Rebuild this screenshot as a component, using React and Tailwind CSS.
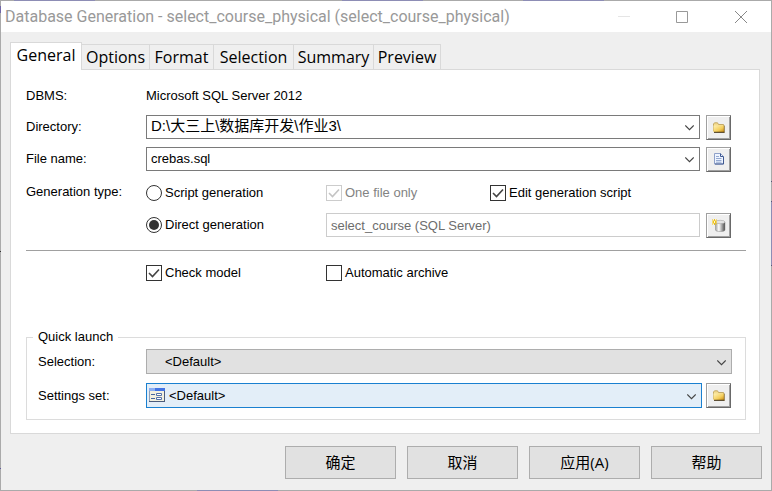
import React from "react";

const tabs = [
  { name: "Options", width: "w-[68px]" },
  { name: "Format", width: "w-16" },
  { name: "Selection", width: "w-20" },
  { name: "Summary", width: "w-20" },
  { name: "Preview", width: "w-[67px]" },
];

function Chevron() {
  return (
    <svg viewBox="0 0 9 6" className="pointer-events-none absolute right-[6px] top-1/2 -mt-[2px] h-[6px] w-[9px]" fill="none" stroke="#444" strokeWidth="1.1">
      <path d="M0.3 0.5 4.5 4.7 8.7 0.5" />
    </svg>
  );
}

function FolderIcon() {
  return (
    <svg viewBox="0 0 12 11" className="h-[11px] w-3">
      <defs>
        <linearGradient id="folder" x1="0" y1="0" x2="1" y2="1">
          <stop offset="0" stopColor="#fff3b8" />
          <stop offset="0.6" stopColor="#f4ce5c" />
          <stop offset="1" stopColor="#c88a14" />
        </linearGradient>
      </defs>
      <path d="M.5 9V2L1.500.8h3L5.500 2.500h5V9z" fill="#f4dc90" stroke="#b89a50" strokeWidth="0.8" />
      <path d="M.5 3.500h10.500v6.500H.5z" fill="url(#folder)" />
      <path d="M1 10.300h10.500" fill="none" stroke="#3a2808" />
      <path d="M11.300 3.500v7" fill="none" stroke="#7a5a18" strokeWidth=".8" />
    </svg>
  );
}

function PageIcon() {
  return (
    <svg viewBox="0 0 10 12" className="h-3 w-[10px]">
      <path d="M.5.5h6l3 3v7.500h-9z" fill="#eef4ff" stroke="#8ea0c8" />
      <path d="M6.500.5v3h3M9.500 4v7H1" fill="none" stroke="#3f5890" />
      <path d="M2 3.500h3M2 5.500h5.500M2 7.500h5.500M2 9.200h5.500" stroke="#93a8d0" />
    </svg>
  );
}

function DatabaseIcon() {
  return (
    <svg viewBox="0 0 14 13" className="h-[13px] w-[14px]">
      <defs>
        <linearGradient id="drum">
          <stop offset="0" stopColor="#a0a0a0" />
          <stop offset="0.35" stopColor="#fff" />
          <stop offset="1" stopColor="#4a4a4a" />
        </linearGradient>
      </defs>
      <path d="M3.500 3v8c0 2 9.500 2 9.500 0V3z" fill="url(#drum)" stroke="#888" strokeWidth=".5" />
      <ellipse cx="8.200" cy="3" rx="4.800" ry="1.700" fill="#e4e4e4" stroke="#999" strokeWidth=".5" />
      <path d="M0 .5h1v1H0zM4 .5h1v1H4zM0 4.500h1v1H0zM4 4.500h1v1H4zM2 0h1v2H2zM2 4h1v2H2zM0 2.500h2v1H0zM3 2.500h2v1H3zM1 1.500h1v1H1zM3 1.500h1v1H3zM1 3.500h1v1H1zM3 3.500h1v1H3z" fill="#f4c410" />
      <path d="M2 2.500h1v1H2z" fill="#fffbd0" />
    </svg>
  );
}

function FormIcon() {
  return (
    <svg viewBox="0 0 16 14" className="pointer-events-none absolute left-[3px] top-[5px] h-[14px] w-4">
      <path d="M.5.5h15v13H.5z" fill="#f3f0df" stroke="#8fa0b8" />
      <path d="M0 0h16v3H0z" fill="#4474e4" />
      <path d="M0 0h6v3H0z" fill="#8aaef4" />
      <path d="M2 6.500h4M2 10.500h4" stroke="#47659e" />
      <path d="M7.500 5.500h5v2h-5zM7.500 9.500h5v2h-5z" fill="#fff" stroke="#5672a8" />
      <path d="M0 13.500h16M15.500 3v11" stroke="#4c5c7c" />
    </svg>
  );
}

function ToolButton({ label, children }) {
  return (
    <button type="button" aria-label={label} className="flex h-[25px] w-[25px] shrink-0 items-center justify-center border border-t-[#a0a0a0] border-r-[#696969] border-b-[#696969] border-l-[#a0a0a0] bg-[#efefef] shadow-[inset_1px_1px_0_#fff,inset_-1px_-1px_0_#a0a0a0]">
      {children}
    </button>
  );
}

function Check({ label, id, checked, disabled }) {
  return (
    <label htmlFor={id} className={disabled ? "flex items-center gap-[3px] text-[#838383]" : "flex items-center gap-[3px]"}>
      <span className="grid">
        <input id={id} type="checkbox" defaultChecked={checked} disabled={disabled} className="peer col-start-1 row-start-1 h-4 w-4 appearance-none border border-[#333] bg-white disabled:border-[#ccc]" />
        <svg viewBox="0 0 16 16" className="pointer-events-none invisible col-start-1 row-start-1 h-4 w-4 peer-checked:visible" fill="none" stroke={disabled ? "#c4c4c4" : "#444"} strokeWidth="1.6">
          <path d="M3 8 6.500 11.500 13 4.500" />
        </svg>
      </span>
      {label}
    </label>
  );
}

function Radio({ label, id, checked }) {
  return (
    <label htmlFor={id} className="flex h-4 w-[180px] shrink-0 items-center gap-[3px]">
      <span className="grid">
        <input id={id} name="generation" type="radio" defaultChecked={checked} className="peer col-start-1 row-start-1 h-4 w-4 appearance-none rounded-full border border-[#333] bg-white" />
        <span className="pointer-events-none invisible col-start-1 row-start-1 m-[3px] h-[10px] w-[10px] rounded-full bg-[#333] peer-checked:visible" />
      </span>
      {label}
    </label>
  );
}

function Combo({ id, value, tone, children }) {
  return (
    <div className="relative min-w-0 flex-1">
      <select id={id} className={"block w-full appearance-none border outline-none " + tone}>
        <option>{value}</option>
      </select>
      {children}
      <Chevron />
    </div>
  );
}

const fieldLabel = "w-[120px] shrink-0";
const launchLabel = "w-[108px] shrink-0";
const dialogButton = "h-[33px] w-[111px] border border-[#adadad] bg-[#e1e1e1] pb-[2px] font-['Open_Sans','Noto_Sans_CJK_SC',sans-serif] text-[15px]";

export default function App() {
  return (
    <main className="flex min-h-screen bg-[#efefef] font-['Liberation_Sans','Noto_Sans_CJK_SC',sans-serif] text-[13px] leading-4 text-black">
      <div className="w-px shrink-0 bg-[#aaa]">
        <div className="mt-[6px] h-[7px] bg-[#7066a8]" />
        <div className="mt-[238px] h-px bg-[#333]" />
        <div className="mt-[216px] h-px bg-[#5f58a0]" />
      </div>

      <div className="flex min-w-0 flex-1 flex-col">
        <div className="flex h-px shrink-0 bg-[#aaa]">
          <div className="ml-[13px] h-px w-[81px] bg-[#8d8db5]" />
          <div className="ml-[247px] h-px w-[81px] bg-[#8d8db5]" />
          <div className="ml-[100px] h-px w-[81px] bg-[#8d8db5]" />
        </div>

        <header className="flex h-[31px] items-center justify-between bg-white pl-1">
          <h1 className="whitespace-nowrap font-['Roboto',sans-serif] text-base text-[#999]">Database Generation - select_course_physical (select_course_physical)</h1>
          <div className="flex items-center pr-6">
            <button type="button" aria-label="Minimize" disabled className="mr-[46px]">
              <svg viewBox="0 0 12 12" className="h-3 w-3"><path d="M0 5.500h12" stroke="#e5e5e5" /></svg>
            </button>
            <button type="button" aria-label="Maximize" className="mr-[47px]">
              <svg viewBox="0 0 12 12" className="h-3 w-3" fill="none" stroke="#999"><path d="M.5.5h11v11H.5z" /></svg>
            </button>
            <button type="button" aria-label="Close">
              <svg viewBox="0 0 12 12" className="h-3 w-3" stroke="#888"><path d="m0 0 12 12M12 0 0 12" /></svg>
            </button>
          </div>
        </header>

        <div className="pt-[10px] pr-[11px] pl-[9px]">
          <div role="tablist" className="flex items-end font-['Open_Sans',sans-serif] text-base">
            <button type="button" role="tab" aria-selected="true" className="z-10 -mb-px h-7 w-[72px] border border-b-0 border-[#d9d9d9] bg-white pb-1">General</button>
            {tabs.map((tab) => (
              <button key={tab.name} type="button" role="tab" aria-selected="false" className={"h-[25px] border border-b-0 border-l-0 border-[#d9d9d9] " + tab.width}>{tab.name}</button>
            ))}
          </div>

          <form className="border border-[#d9d9d9] bg-white pt-[15px] pr-[13px] pb-[13px] pl-[15px]">
            <div className="flex flex-col gap-2 pr-[15px]">
              <div className="flex h-[22px] items-center">
                <span className={fieldLabel}>DBMS:</span>
                <span>Microsoft SQL Server 2012</span>
              </div>
              <div className="flex h-6 items-center">
                <label htmlFor="directory" className={fieldLabel}>Directory:</label>
                <Combo id="directory" value="D:\大三上\数据库开发\作业3\" tone="h-6 border-[#7a7a7a] bg-white pb-[2px] pl-1 text-[15px]" />
                <div className="ml-[6px]"><ToolButton label="Browse directory"><FolderIcon /></ToolButton></div>
              </div>
              <div className="flex h-6 items-center">
                <label htmlFor="file" className={fieldLabel}>File name:</label>
                <Combo id="file" value="crebas.sql" tone="h-6 border-[#7a7a7a] bg-white pl-1" />
                <div className="ml-[6px]"><ToolButton label="Preview file"><PageIcon /></ToolButton></div>
              </div>
              <div className="flex h-[26px] items-center pt-[2px]">
                <span className={fieldLabel + " pb-[2px]"}>Generation type:</span>
                <Radio id="script" label="Script generation" />
                <div className="w-[164px] shrink-0"><Check id="one-file" label="One file only" checked disabled /></div>
                <Check id="edit-script" label="Edit generation script" checked />
              </div>
              <div className="flex h-6 items-center pl-[120px]">
                <Radio id="direct" label="Direct generation" checked />
                <input aria-label="Data source" disabled defaultValue="select_course (SQL Server)" className="h-6 min-w-0 flex-1 border border-[#ccc] bg-white px-1 text-[#6d6d6d]" />
                <div className="ml-[6px]"><ToolButton label="Connect to data source"><DatabaseIcon /></ToolButton></div>
              </div>
            </div>

            <hr className="mt-[13px] border-[#a0a0a0]" />

            <div className="mt-[14px] flex pl-[120px]">
              <div className="w-[180px] shrink-0"><Check id="check-model" label="Check model" checked /></div>
              <Check id="archive" label="Automatic archive" />
            </div>

            <fieldset className="mt-12 border border-[#dcdcdc] pt-1 pr-[13px] pb-[11px] pl-[11px]">
              <legend className="-ml-[5px] px-[5px]">Quick launch</legend>
              <div className="flex flex-col gap-[9px]">
                <div className="flex items-center">
                  <label htmlFor="selection" className={launchLabel}>Selection:</label>
                  <Combo id="selection" value="<Default>" tone="h-[25px] border-[#adadad] bg-[#e1e1e1] pl-[18px]" />
                </div>
                <div className="flex items-center pr-px">
                  <label htmlFor="settings" className={launchLabel}>Settings set:</label>
                  <Combo id="settings" value="<Default>" tone="h-[25px] border-[#1a80d0] bg-[#e3eef8] pl-[22px]">
                    <FormIcon />
                  </Combo>
                  <div className="ml-1"><ToolButton label="Manage settings sets"><FolderIcon /></ToolButton></div>
                </div>
              </div>
            </fieldset>
          </form>
        </div>

        <footer className="flex justify-end gap-[11px] pt-3 pr-[9px] pb-[11px]">
          <button type="button" className={dialogButton}>确定</button>
          <button type="button" className={dialogButton}>取消</button>
          <button type="button" className={dialogButton}>应用(A)</button>
          <button type="button" className={dialogButton}>帮助</button>
        </footer>

        <div className="mt-auto flex h-px shrink-0 bg-[#aaa]">
          <div className="ml-[196px] h-px w-[81px] bg-[#8d8db5]" />
        </div>
      </div>

      <div className="w-px shrink-0 bg-[#aaa]">
        <div className="mt-[181px] h-px bg-[#555577]" />
        <div className="mt-[19px] h-[65px] border-y border-[#555577] bg-[#8d8db5]" />
      </div>
    </main>
  );
}
